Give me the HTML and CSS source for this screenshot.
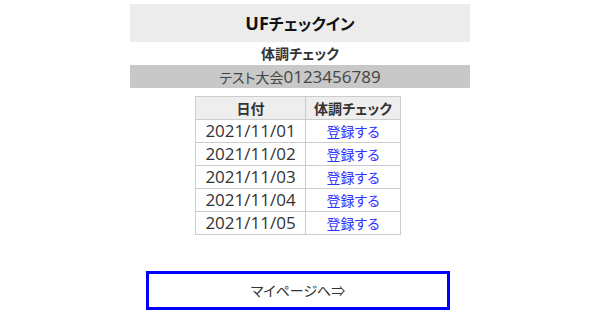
FILE: index.html
```html
<!DOCTYPE html>
<html lang="ja">

    <head>
        <meta charset="UTF-8">
        <meta name="viewport" content="width=device-width, initial-scale=1.0">
        <title>UFチェックイン</title>

        <link rel="stylesheet" href="styles.css">
    </head>

    <body>

        <div class="page">
            <h1 class="title"><span class="en">UF</span>チェックイン</h1>
            <h2 class="subtitle">体調チェック</h2>
            <div class="event">テスト大会<span class="en">0123456789</span></div>

            <table class="days">
                <tr>
                    <th class="col-date">日付</th>
                    <th class="col-check">体調チェック</th>
                </tr>
                <tr>
                    <td class="date">2021/11/01</td>
                    <td><a href="#">登録する</a></td>
                </tr>
                <tr>
                    <td class="date">2021/11/02</td>
                    <td><a href="#">登録する</a></td>
                </tr>
                <tr>
                    <td class="date">2021/11/03</td>
                    <td><a href="#">登録する</a></td>
                </tr>
                <tr>
                    <td class="date">2021/11/04</td>
                    <td><a href="#">登録する</a></td>
                </tr>
                <tr>
                    <td class="date">2021/11/05</td>
                    <td><a href="#">登録する</a></td>
                </tr>
            </table>

            <a class="mypage" href="#">マイページへ⇒</a>
        </div>

    </body>

</html>
```

FILE: styles.css
```css
body {
    margin: 0;
    font-family: "Noto Sans CJK JP", sans-serif;
    font-size: 14px;
    font-feature-settings: "palt";
    color: #333;
    background-color: #fff;
}

.en {
    font-family: "Open Sans", "Noto Sans", sans-serif;
}

.page {
    width: 340px;
    margin: 4px auto 0;
}

.title {
    margin: 0;
    height: 38px;
    line-height: 38px;
    background-color: #ececec;
    text-align: center;
    font-size: 16px;
    font-weight: bold;
    color: #111;
}

.title .en {
    font-size: 18px;
}

.subtitle {
    margin: 0;
    height: 23px;
    line-height: 23px;
    text-align: center;
    font-size: 14px;
    font-weight: bold;
}

.event {
    height: 23px;
    line-height: 23px;
    background-color: #c8c8c8;
    text-align: center;
    color: #444;
}

.event .en {
    font-size: 17px;
}

.days {
    border-collapse: collapse;
    margin: 8px 0 0 65px;
}

.days th,
.days td {
    border: 1px solid #ccc;
    padding: 0;
    height: 22px;
    line-height: 22px;
    text-align: center;
}

.days th {
    background-color: #eee;
    font-weight: bold;
}

.col-date {
    width: 109px;
}

.col-check {
    width: 94px;
}

.date {
    font-family: "Open Sans", "Noto Sans", sans-serif;
    font-size: 17px;
}

.days a {
    color: #3333ff;
    text-decoration: none;
}

.mypage {
    display: block;
    box-sizing: border-box;
    width: 304px;
    height: 39px;
    margin: 36px 0 0 16px;
    border: 3px solid #0000ff;
    line-height: 33px;
    text-align: center;
    color: #333;
    text-decoration: none;
}
```
